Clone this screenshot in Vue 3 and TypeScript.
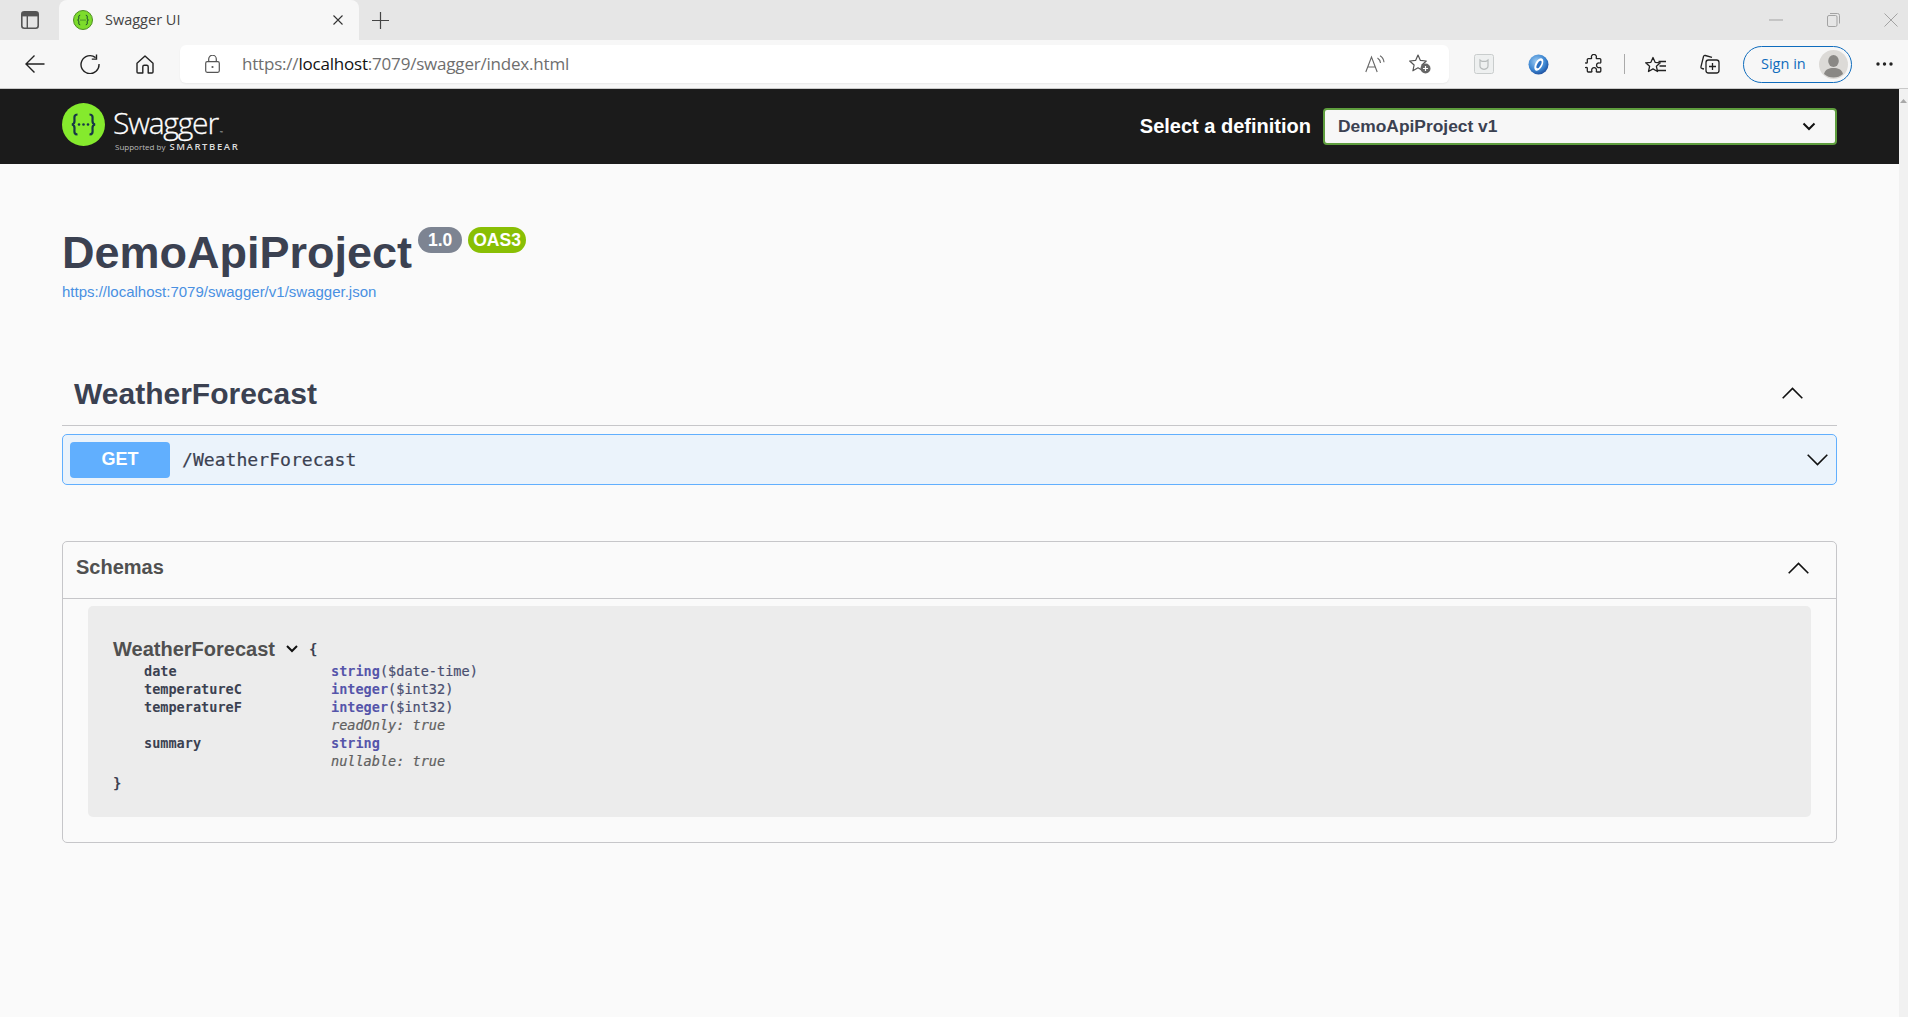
<script setup lang="ts">
interface Prop { name: string; type: string; format?: string; note?: string }
const props: Prop[] = [
  { name: 'date', type: 'string', format: '($date-time)' },
  { name: 'temperatureC', type: 'integer', format: '($int32)' },
  { name: 'temperatureF', type: 'integer', format: '($int32)', note: 'readOnly: true' },
  { name: 'summary', type: 'string', note: 'nullable: true' },
]
</script>

<template>
  <div class="shell">
    <div class="tabstrip">
      <svg class="tabs-ico" width="18" height="18" viewBox="0 0 18 18" fill="none">
        <rect x="0.8" y="0.8" width="16.4" height="16.4" rx="2.5" stroke="#555" stroke-width="1.6"/>
        <rect x="1" y="1" width="16" height="4.4" fill="#555"/>
        <path d="M6.3 5v12" stroke="#555" stroke-width="1.4"/>
      </svg>
      <div class="tab">
        <svg class="favicon" width="20" height="20" viewBox="0 0 20 20">
          <circle cx="10" cy="10" r="9.5" fill="#7ddc2c" stroke="#4f8f24" stroke-width="1"/>
          <path d="M7.2 5.2c-1.8 0-1.4 1.6-1.4 3 0 1.2-.6 1.7-1.2 1.8.6.1 1.2.6 1.2 1.8 0 1.4-.4 3 1.4 3M12.8 5.2c1.8 0 1.4 1.6 1.4 3 0 1.2.6 1.7 1.2 1.8-.6.1-1.2.6-1.2 1.8 0 1.4.4 3-1.4 3" fill="none" stroke="#17432c" stroke-width="1"/>
          <circle cx="8" cy="10" r=".6" fill="#17432c"/><circle cx="10" cy="10" r=".6" fill="#17432c"/><circle cx="12" cy="10" r=".6" fill="#17432c"/>
        </svg>
        <span class="tab-title">Swagger UI</span>
        <svg class="tab-close" width="10" height="10" viewBox="0 0 10 10"><path d="M.5.5l9 9M9.5.5l-9 9" stroke="#333" stroke-width="1.1"/></svg>
      </div>
      <svg class="newtab" width="17" height="17" viewBox="0 0 17 17"><path d="M8.5 0v17M0 8.5h17" stroke="#444" stroke-width="1.2"/></svg>
      <div class="winctl">
        <svg width="14" height="14" viewBox="0 0 14 14"><path d="M0 7h14" stroke="#a3a3a3" stroke-width="1"/></svg>
        <svg width="13" height="14" viewBox="0 0 13 14" fill="none"><rect x=".5" y="2.5" width="9.5" height="11" rx="1.5" stroke="#a3a3a3"/><path d="M3 .5h7.5a2 2 0 0 1 2 2v8" stroke="#a3a3a3"/></svg>
        <svg width="14" height="14" viewBox="0 0 14 14"><path d="M.5.5l13 13M13.5.5l-13 13" stroke="#a3a3a3" stroke-width="1"/></svg>
      </div>
    </div>

    <div class="toolbar">
      <svg class="i-back" width="20" height="20" viewBox="0 0 20 20" fill="none"><path d="M19.5 10H1M9.5 1.5L1 10l8.5 8.5" stroke="#222" stroke-width="1.4"/></svg>
      <svg class="i-reload" width="20" height="20" viewBox="0 0 20 20" fill="none"><path d="M15.6 3.6A9 9 0 1 0 19 10" stroke="#222" stroke-width="1.4"/><path d="M16.5.5v4.6h-4.7" stroke="#222" stroke-width="1.4"/></svg>
      <svg class="i-home" width="18" height="19" viewBox="0 0 18 19" fill="none"><path d="M1 8.2L9 1l8 7.2V17a1 1 0 0 1-1 1h-3.8v-6.2a1.5 1.5 0 0 0-1.5-1.5H8.3a1.5 1.5 0 0 0-1.5 1.5V18H2a1 1 0 0 1-1-1z" stroke="#222" stroke-width="1.4" stroke-linejoin="round"/></svg>
      <div class="address">
        <svg class="i-lock" width="15" height="18" viewBox="0 0 15 18" fill="none"><rect x=".7" y="6.7" width="13.6" height="10.6" rx="1.5" stroke="#555" stroke-width="1.2"/><path d="M3.7 6.5V4a3.8 3.8 0 0 1 7.6 0v2.5" stroke="#555" stroke-width="1.2"/><circle cx="7.5" cy="12" r="1.1" fill="#555"/></svg>
        <span class="url">https://<b>localhost</b>:7079/swagger/index.html</span>
        <svg class="i-read" width="21" height="18" viewBox="0 0 21 18" fill="none"><path d="M.8 17L6.5 2l5.7 15M2.8 12h7.4" stroke="#666" stroke-width="1.1"/><path d="M12.5 3c2 1.2 2.8 2.7 3 5M15 .8c2.6 1.5 3.7 3.6 4 6.4" stroke="#666" stroke-width="1.1"/></svg>
        <svg class="i-starplus" width="22" height="20" viewBox="0 0 22 20" fill="none"><path d="M9 1l2.400 5.400 5.900.6-4.400 4 1.200 5.800L9 13.800 3.900 16.800 5.100 11 .7 7l5.900-.6z" stroke="#555" stroke-width="1.2" stroke-linejoin="round"/><circle cx="16.500" cy="14.500" r="5" fill="#666"/><path d="M16.500 12v5M14 14.500h5" stroke="#fff" stroke-width="1.2"/></svg>
      </div>
      <svg class="i-mask" width="20" height="20" viewBox="0 0 20 20" fill="none"><rect x=".5" y=".5" width="19" height="19" rx="2" fill="#eef0f0" stroke="#c9cdcd"/><path d="M6 6l2 1.400h4L14 6v6c0 2-2 3-4 3.400C8 15 6 14 6 12z" stroke="#b8bcbc" stroke-width="1.2"/></svg>
      <svg class="i-blue" width="21" height="21" viewBox="0 0 21 21">
        <defs><radialGradient id="bl" cx=".4" cy=".35" r=".75"><stop offset="0" stop-color="#9ccbf2"/><stop offset=".6" stop-color="#3a84d0"/><stop offset="1" stop-color="#163f8e"/></radialGradient></defs>
        <circle cx="10.500" cy="10.500" r="10" fill="url(#bl)"/>
        <ellipse cx="10.800" cy="10.500" rx="3.600" ry="6.800" transform="rotate(28 10.800 10.500)" fill="#fff"/>
        <ellipse cx="11" cy="10.500" rx="1.800" ry="4.200" transform="rotate(28 11 10.500)" fill="#2a6fc0"/>
      </svg>
      <svg class="i-puzzle" width="18" height="20" viewBox="0 0 18 20" fill="none"><path d="M6.500 3.600a2.500 2.500 0 1 1 4.800 0c-.2.600 0 1 .8 1h2.700a1 1 0 0 1 1 1v2.700c0 .8-.6.900-1.200.7a2.400 2.400 0 1 0 0 4.600c.6-.2 1.200-.1 1.200.7v2.700a1 1 0 0 1-1 1h-2.700c-.8 0-.9-.6-.7-1.200a2.400 2.400 0 1 0-4.600 0c.2.600.1 1.200-.7 1.200H3.300a1 1 0 0 1-1-1v-2.700c0-.8-.5-1-1-.8a2.300 2.300 0 1 1 0-4.500c.5.200 1 0 1-.8V5.600a1 1 0 0 1 1-1h2.400c.8 0 1-.4.800-1z" stroke="#222" stroke-width="1.300"/></svg>
      <div class="sep"></div>
      <svg class="i-fav" width="21" height="20" viewBox="0 0 21 20" fill="none"><path d="M8 1.500l2.100 4.800 5.200.5-3.900 3.500 1.100 5.200L8 12.900l-4.500 2.600 1.100-5.200L.7 6.800l5.200-.5z" stroke="#222" stroke-width="1.300" stroke-linejoin="round" transform="translate(0 2)"/><path d="M13.500 7.500H21M14.500 12H21M12 16.500h9" stroke="#222" stroke-width="1.300"/></svg>
      <svg class="i-coll" width="20" height="20" viewBox="0 0 20 20" fill="none"><path d="M4 15l-2-.5a1.500 1.500 0 0 1-1-1.800L3.500 2.500A1.500 1.500 0 0 1 5.300 1.500l6.700 1.800" stroke="#222" stroke-width="1.300"/><rect x="6" y="6" width="13" height="13" rx="2.500" stroke="#222" stroke-width="1.300"/><path d="M12.500 9v7M9 12.500h7" stroke="#222" stroke-width="1.300"/></svg>
      <div class="signin">
        <span class="signin-text">Sign in</span>
        <svg class="avatar" width="29" height="29" viewBox="0 0 29 29"><circle cx="14.500" cy="14.500" r="14.500" fill="#dcdad7"/><ellipse cx="14.500" cy="11" rx="5.300" ry="6" fill="#8a8885"/><path d="M5 24c1-4.500 5-6 9.500-6s8.500 1.500 9.500 6a14.500 14.500 0 0 1-19 0z" fill="#8a8885"/></svg>
      </div>
      <svg class="i-more" width="17" height="4" viewBox="0 0 17 4"><circle cx="2" cy="2" r="1.700" fill="#222"/><circle cx="8.500" cy="2" r="1.700" fill="#222"/><circle cx="15" cy="2" r="1.700" fill="#222"/></svg>
    </div>

    <div class="viewport">
      <div class="page">
        <header class="topbar">
          <div class="logo">
            <svg width="43" height="43" viewBox="0 0 43 43">
              <circle cx="21.500" cy="21.500" r="21.500" fill="#85ea2d"/>
              <path d="M15.500 11.500c-4 0-3 3.500-3 6.500 0 2.500-1.200 3.200-2.500 3.500 1.300.3 2.500 1 2.500 3.500 0 3-1 6.500 3 6.500M27.500 11.500c4 0 3 3.500 3 6.500 0 2.500 1.200 3.200 2.500 3.500-1.300.3-2.500 1-2.500 3.500 0 3 1 6.500-3 6.500" fill="none" stroke="#173647" stroke-width="2.200"/>
              <circle cx="17" cy="21.500" r="1.300" fill="#173647"/><circle cx="21.500" cy="21.500" r="1.300" fill="#173647"/><circle cx="26" cy="21.500" r="1.300" fill="#173647"/>
            </svg>
            <div class="logo-text">
              <div class="logo-name">Swagger<sup class="tm">™</sup></div>
              <div class="logo-sub"><span class="by">Supported by</span><span class="sb">SMARTBEAR</span></div>
            </div>
          </div>
          <div class="definition">
            <span class="def-label">Select a definition</span>
            <div class="def-select">
              <span>DemoApiProject v1</span>
              <svg width="14" height="9" viewBox="0 0 14 9" fill="none"><path d="M1.500 1.500L7 7l5.500-5.500" stroke="#111" stroke-width="2"/></svg>
            </div>
          </div>
        </header>

        <main class="wrap">
          <section class="info">
            <div class="title-row">
              <h1 class="title">DemoApiProject</h1>
              <span class="badge ver">1.0</span>
              <span class="badge oas">OAS3</span>
            </div>
            <a class="spec-link">https://localhost:7079/swagger/v1/swagger.json</a>
          </section>

          <section class="tag">
            <h2 class="tag-name">WeatherForecast</h2>
            <svg class="chev-up" width="21" height="12" viewBox="0 0 21 12" fill="none"><path d="M.7 11.300L10.500 1.500l9.800 9.800" stroke="#111" stroke-width="1.600"/></svg>
          </section>

          <div class="op">
            <span class="method"><span class="method-text">GET</span></span>
            <span class="path">/WeatherForecast</span>
            <svg width="21" height="12" viewBox="0 0 21 12" fill="none"><path d="M.7.700l9.800 9.800L20.300.700" stroke="#111" stroke-width="1.600"/></svg>
          </div>

          <section class="schemas">
            <div class="schemas-head">
              <h4>Schemas</h4>
              <svg class="chev-up" width="21" height="12" viewBox="0 0 21 12" fill="none"><path d="M.7 11.300L10.500 1.500l9.800 9.800" stroke="#111" stroke-width="1.600"/></svg>
            </div>
            <div class="model-box">
              <div class="model-head">
                <span class="model-name">WeatherForecast</span>
                <svg class="model-chev" width="12" height="8" viewBox="0 0 12 8" fill="none"><path d="M1 1l5 5 5-5" stroke="#111" stroke-width="2"/></svg>
                <span class="brace">{</span>
              </div>
              <div v-for="p in props" :key="p.name" class="prop">
                <div class="prop-name">{{ p.name }}</div>
                <div class="prop-type">
                  <div><span class="type">{{ p.type }}</span><span v-if="p.format" class="fmt">{{ p.format }}</span></div>
                  <div v-if="p.note" class="note">{{ p.note }}</div>
                </div>
              </div>
              <div class="brace close">}</div>
            </div>
          </section>
        </main>
      </div>
      <div class="scrollbar"><svg width="7" height="5" viewBox="0 0 7 5"><path d="M0 5l3.500-4L7 5z" fill="#a8a8a8"/></svg></div>
    </div>
  </div>
</template>

<style scoped>
.shell { width: 1908px; height: 1017px; overflow: hidden; display: flex; flex-direction: column; font-family: "Liberation Sans", Arial, sans-serif; background: #fafafa; }
.tabstrip { height: 40px; flex: none; background: #e6e6e6; display: flex; align-items: center; position: relative; }
.tabs-ico { margin-left: 21px; }
.tab { margin-left: 20px; width: 300px; height: 40px; background: #f7f7f7; border-radius: 8px 8px 0 0; display: flex; align-items: center; padding: 0 16px 0 14px; box-sizing: border-box; }
.tab-title { margin-left: 12px; margin-bottom: 2px; flex: 1; font: 14.500px "Open Sans", sans-serif; color: #444; }
.newtab { margin-left: 13px; }
.winctl { margin-left: auto; margin-right: 10px; display: flex; align-items: center; gap: 44px; }
.toolbar { height: 49px; flex: none; box-sizing: border-box; background: #f7f7f7; border-bottom: 1px solid #c9c9c9; display: flex; align-items: center; }
.i-back { margin-left: 25px; }
.i-reload { margin-left: 35px; }
.i-home { margin-left: 36px; }
.address { margin-left: 26px; width: 1269px; height: 38px; background: #fff; border-radius: 6px; display: flex; align-items: center; box-shadow: 0 1px 2px rgba(0,0,0,.06); }
.i-lock { margin-left: 25px; }
.url { margin-left: 22px; margin-bottom: 2px; flex: 1; font: 17px "Open Sans", sans-serif; color: #6e6e6e; letter-spacing: -0.2px; }
.url b { font-weight: 400; color: #111; }
.i-starplus { margin-left: 23px; margin-right: 18px; }
.i-mask { margin-left: 25px; }
.i-blue { margin-left: 34px; }
.i-puzzle { margin-left: 36px; }
.sep { margin-left: 21px; width: 1px; height: 20px; background: #aaa; }
.i-fav { margin-left: 20px; }
.i-coll { margin-left: 34px; }
.signin { margin-left: 23px; width: 109px; height: 37px; box-sizing: border-box; border: 1.500px solid #0f6cbd; border-radius: 19px; display: flex; align-items: center; padding: 0 3px 0 17px; justify-content: space-between; }
.signin-text { margin-bottom: 2px; font: 14.500px "Open Sans", sans-serif; color: #0f6cbd; }
.i-more { margin-left: 24px; }

.viewport { flex: 1; display: flex; min-height: 0; }
.page { flex: 1; min-width: 0; background: #fafafa; }
.scrollbar { width: 9px; background: #f1f1f1; display: flex; justify-content: center; padding-top: 9px; align-items: flex-start; }
.topbar { height: 75px; background: #1b1b1b; box-sizing: border-box; padding: 0 62px; display: flex; align-items: center; justify-content: space-between; }
.logo { display: flex; align-items: center; gap: 8px; margin-bottom: 5px; }
.logo-text { color: #fff; width: 127px; }
.logo-name { font: 300 30px/31px "Open Sans", sans-serif; letter-spacing: -1.200px; margin-top: 11px; -webkit-text-stroke: .3px #fff; }
.tm { font-size: 4px; vertical-align: baseline; margin-left: 2px; -webkit-text-stroke: 0; }
.logo-sub { display: flex; align-items: baseline; gap: 4px; margin-top: -8px; margin-left: 2px; white-space: nowrap; }
.by { font: 8px "Open Sans", sans-serif; color: #bbb; }
.sb { font: 600 9.500px "Open Sans", sans-serif; letter-spacing: 1.600px; color: #ddd; }
.definition { display: flex; align-items: center; gap: 12px; }
.def-label { color: #fff; font-weight: 700; font-size: 20px; }
.def-select { width: 514px; height: 37px; box-sizing: border-box; border: 2.500px solid #5f9e3e; border-radius: 4px; background: #f7f7f7; display: flex; align-items: center; justify-content: space-between; padding: 0 19px 0 13px; color: #3b4151; font-weight: 700; font-size: 17.400px; }

.wrap { padding: 0 62px; }
.info { padding-top: 63px; height: 193px; box-sizing: border-box; }
.title-row { display: flex; align-items: flex-start; }
.title { margin: 0; font-size: 45px; line-height: 52px; font-weight: 700; color: #3b4151; }
.badge { height: 26px; border-radius: 13px; color: #fff; font-weight: 700; font-size: 17.500px; line-height: 26px; text-align: center; }
.ver { width: 44px; background: #7d8492; margin-left: 6px; }
.oas { width: 58px; background: #89bf04; margin-left: 6px; }
.spec-link { display: block; margin-top: 4px; color: #4990e2; font-size: 15px; line-height: 18px; }
.tag { height: 69px; box-sizing: border-box; border-bottom: 1.500px solid #c6c6c9; display: flex; align-items: center; justify-content: space-between; padding: 6px 34px 0 12px; }
.tag-name { margin: 0; font-size: 30px; font-weight: 700; color: #3b4151; }
.chev-up { margin-bottom: 2px; }
.op { margin-top: 8px; height: 51px; box-sizing: border-box; border: 1.500px solid #61affe; border-radius: 5px; background: #ebf3fb; display: flex; align-items: center; padding: 0 8px 0 7px; }
.method { width: 100px; height: 36px; border-radius: 4px; background: #61affe; color: #fff; font-weight: 700; font-size: 18px; line-height: 34px; text-align: center; }
.path { flex: 1; margin-left: 12px; font: 18.100px "DejaVu Sans Mono", monospace; color: #3b4151; -webkit-text-stroke: .2px #3b4151; }
.schemas { margin-top: 56px; height: 302px; box-sizing: border-box; border: 1.500px solid #c6c6c9; border-radius: 5px; }
.schemas-head { height: 57px; box-sizing: border-box; border-bottom: 1.500px solid #c6c6c9; display: flex; align-items: center; justify-content: space-between; padding: 0 27px 3px 13px; }
.schemas-head h4 { margin: 0 0 2px; font-size: 20px; font-weight: 700; color: #505050; }
.model-box { margin: 7px 25px 0; height: 211px; box-sizing: border-box; background: #ececec; border-radius: 5px; padding: 30px 25px 0; font: 13.550px/18px "DejaVu Sans Mono", monospace; color: #3b4151; }
.model-head { display: flex; align-items: center; height: 26px; }
.model-name { font: 700 20px/26px "Liberation Sans", sans-serif; color: #505050; }
.model-chev { margin-left: 11px; }
.brace { font-weight: 700; font-size: 14px; color: #3b4151; }
.model-head .brace { margin-left: 11px; }
.close { line-height: 26px; }
.prop { display: grid; grid-template-columns: 187px 1fr; padding-left: 31px; }
.prop-name { font-weight: 700; }
.type { color: #55a; font-weight: 700; }
.fmt { color: #4a4f70; font-weight: 400; -webkit-text-stroke: .2px #4a4f70; }
.note { font-style: italic; font-weight: 400; color: #606060; -webkit-text-stroke: .2px #606060; }
</style>
